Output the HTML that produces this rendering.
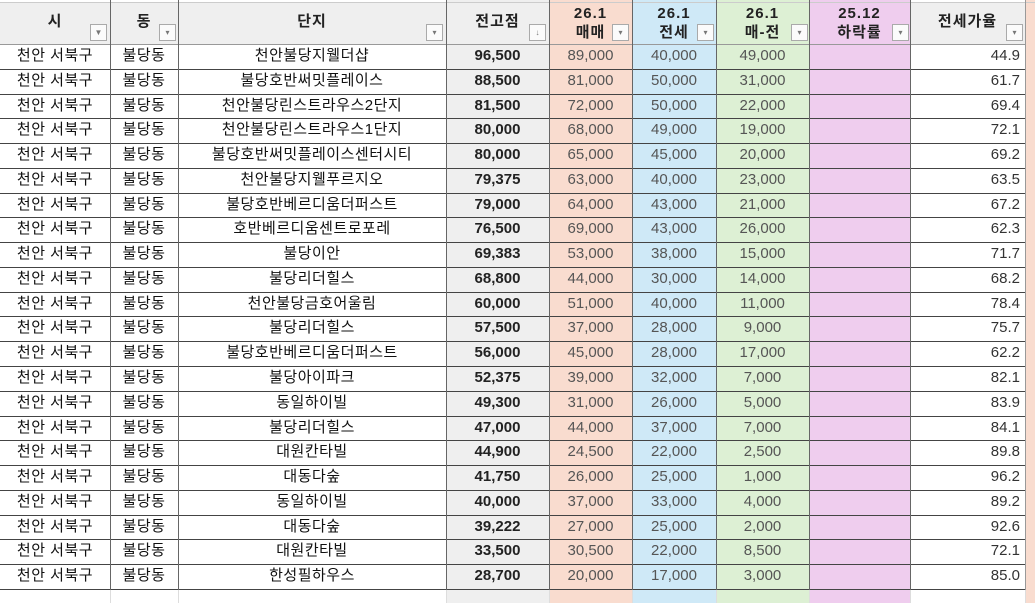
<!DOCTYPE html><html><head><meta charset="utf-8"><style>
body{margin:0;width:1035px;height:603px;overflow:hidden;background:#fff;font-family:"Liberation Sans","Noto Sans CJK KR",sans-serif;}
.c{position:absolute;box-sizing:border-box;font-size:15px;color:#111;white-space:nowrap;overflow:hidden}
.v{position:absolute;top:0;width:1px;height:590px;background:#666}
.h{position:absolute;left:0;width:1035px;height:1px;background:#444}
.dd{position:absolute;width:17px;height:17px;border:1px solid #aaa;background:#fbfbfb;box-sizing:border-box;font-size:8px;color:#777;text-align:center;line-height:15px}
</style></head><body>
<div id="t"></div>
<script>
var W=[110,68,268,103,83,84,93,101,115,10],X=[0];for(var i=0;i<W.length;i++)X.push(X[i]+W[i]);
var bgc=['#fff','#fff','#fff','#efefef','#f9dccf','#cfe9f7','#ddf0d4','#efcdee','#fff','#f9dccf'];
var hbg=['#efefef','#efefef','#efefef','#efefef','#f9dccf','#cfe9f7','#ddf0d4','#efcdee','#efefef','#f9dccf'];
var d=[["천안불당지웰더샵","96,500","89,000","40,000","49,000","44.9"],["불당호반써밋플레이스","88,500","81,000","50,000","31,000","61.7"],["천안불당린스트라우스2단지","81,500","72,000","50,000","22,000","69.4"],["천안불당린스트라우스1단지","80,000","68,000","49,000","19,000","72.1"],["불당호반써밋플레이스센터시티","80,000","65,000","45,000","20,000","69.2"],["천안불당지웰푸르지오","79,375","63,000","40,000","23,000","63.5"],["불당호반베르디움더퍼스트","79,000","64,000","43,000","21,000","67.2"],["호반베르디움센트로포레","76,500","69,000","43,000","26,000","62.3"],["불당이안","69,383","53,000","38,000","15,000","71.7"],["불당리더힐스","68,800","44,000","30,000","14,000","68.2"],["천안불당금호어울림","60,000","51,000","40,000","11,000","78.4"],["불당리더힐스","57,500","37,000","28,000","9,000","75.7"],["불당호반베르디움더퍼스트","56,000","45,000","28,000","17,000","62.2"],["불당아이파크","52,375","39,000","32,000","7,000","82.1"],["동일하이빌","49,300","31,000","26,000","5,000","83.9"],["불당리더힐스","47,000","44,000","37,000","7,000","84.1"],["대원칸타빌","44,900","24,500","22,000","2,500","89.8"],["대동다숲","41,750","26,000","25,000","1,000","96.2"],["동일하이빌","40,000","37,000","33,000","4,000","89.2"],["대동다숲","39,222","27,000","25,000","2,000","92.6"],["대원칸타빌","33,500","30,500","22,000","8,500","72.1"],["한성필하우스","28,700","20,000","17,000","3,000","85.0"]];
var h='';var RH=24.77,T=44;
for(var i=0;i<10;i++){h+='<div class="c" style="left:'+X[i]+'px;top:0;width:'+W[i]+'px;height:603px;background:'+bgc[i]+'"></div>';h+='<div class="c" style="left:'+X[i]+'px;top:3px;width:'+W[i]+'px;height:41px;background:'+hbg[i]+'"></div>';}
function ht(i,txt,two){h+='<div class="c" style="left:'+X[i]+'px;top:'+(two?4:12)+'px;width:'+W[i]+'px;text-align:center;font-weight:bold;font-size:15px;letter-spacing:1px;line-height:19px;color:#222">'+txt+'</div>';}
ht(0,'시');ht(1,'동');ht(2,'단지');ht(3,'전고점');ht(4,'26.1<br>매매',1);ht(5,'26.1<br>전세',1);ht(6,'26.1<br>매-전',1);ht(7,'25.12<br>하락률',1);ht(8,'전세가율');
var dd=[[90,'▼'],[159,'▾'],[426,'▾'],[529,'↓'],[612,'▾'],[697,'▾'],[791,'▾'],[892,'▾'],[1006,'▾']];
dd.forEach(function(a){h+='<div class="dd" style="left:'+a[0]+'px;top:24px">'+a[1]+'</div>';});
for(var r=0;r<d.length;r++){var y=T+r*RH,rw=d[r];
function cell(i,txt,al,st){h+='<div class="c" style="left:'+X[i]+'px;top:'+y+'px;width:'+W[i]+'px;height:'+RH+'px;line-height:'+RH+'px;text-align:'+al+';padding:0 5px;'+(st||'')+'">'+txt+'</div>';}
cell(0,'천안 서북구','center','letter-spacing:0.5px');cell(1,'불당동','center','letter-spacing:0.5px');cell(2,rw[0],'center','letter-spacing:0.5px');cell(3,rw[1],'center','font-weight:bold;color:#222');
cell(4,rw[2],'center','color:#555');cell(5,rw[3],'center','color:#555');cell(6,rw[4],'center','color:#555');cell(8,rw[5],'right','color:#333');
h+='<div class="h" style="top:'+(y+RH)+'px;width:1025px"></div>';}
h+='<div class="h" style="top:44px;width:1025px;background:#999"></div><div class="h" style="top:2px;background:#ccc"></div>';
for(var i=1;i<10;i++)h+='<div class="v" style="left:'+X[i]+'px;'+(i==9?'background:#999':'')+'"></div>';
for(var i=1;i<10;i++)h+='<div style="position:absolute;left:'+X[i]+'px;top:590px;width:1px;height:13px;background:#ddd"></div>';
document.getElementById('t').innerHTML=h;
</script></body></html>
